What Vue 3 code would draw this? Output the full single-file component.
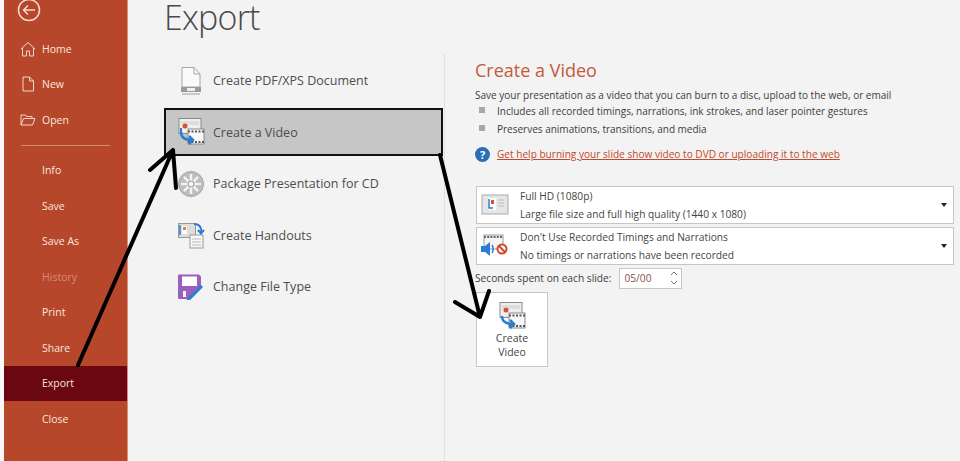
<script setup>
const navTop = [
  { label: 'Home', icon: 'home' },
  { label: 'New', icon: 'new' },
  { label: 'Open', icon: 'open' },
]
const navBottom = [
  { label: 'Info' },
  { label: 'Save' },
  { label: 'Save As' },
  { label: 'History', disabled: true },
  { label: 'Print' },
  { label: 'Share' },
  { label: 'Export', active: true },
  { label: 'Close' },
]
const exportItems = [
  { label: 'Create PDF/XPS Document', icon: 'pdf' },
  { label: 'Create a Video', icon: 'video', selected: true },
  { label: 'Package Presentation for CD', icon: 'cd' },
  { label: 'Create Handouts', icon: 'handouts' },
  { label: 'Change File Type', icon: 'type' },
]
const spokes = [0, 45, 90, 135, 180, 225, 270, 315]
</script>

<template>
  <div class="page">
    <div class="edge"></div>
    <nav class="sidebar">
      <div class="back">
        <svg width="24" height="24" viewBox="0 0 24 24" fill="none" stroke="#f3dcd4" stroke-width="1.5">
          <circle cx="12" cy="12" r="10.5" />
          <path d="M18 12H6.5M11 7.5L6.5 12l4.5 4.5" />
        </svg>
      </div>
      <div v-for="item in navTop" :key="item.label" class="nav-item">
        <span class="nav-icon">
          <svg v-if="item.icon === 'home'" width="16" height="16" viewBox="0 0 16 16" fill="none" stroke="#f1d5cb" stroke-width="1">
            <path d="M1 8l7-6.500L15 8M2.500 7v8h4v-5h3v5h4V7" />
          </svg>
          <svg v-else-if="item.icon === 'new'" width="14" height="16" viewBox="0 0 14 16" fill="none" stroke="#f1d5cb" stroke-width="1">
            <path d="M2 1h6.500L12.500 5v10H2zM8.500 1v4h4" />
          </svg>
          <svg v-else width="16" height="14" viewBox="0 0 16 14" fill="none" stroke="#f1d5cb" stroke-width="1">
            <path d="M1 12V2h4.500l1 1.500H12V5M1 12l2.500-6.500H15L12.500 12z" />
          </svg>
        </span>
        {{ item.label }}
      </div>
      <div class="nav-rule"></div>
      <div
        v-for="item in navBottom"
        :key="item.label"
        class="nav-item"
        :class="{ disabled: item.disabled, active: item.active }"
      >
        <span class="nav-icon"></span>
        {{ item.label }}
      </div>
    </nav>

    <main class="main">
      <h1 class="title">Export</h1>
      <div class="columns">
        <ul class="export-list">
          <li v-for="item in exportItems" :key="item.label" class="export-item" :class="{ selected: item.selected }">
            <span class="export-icon">
              <svg v-if="item.icon === 'pdf'" width="26" height="30" viewBox="0 0 26 30" fill="none">
                <path d="M4 1.500h12L22 8v13H4z" fill="#fafafa" stroke="#a5a5a5" />
                <path d="M16 1.500V8h6" stroke="#a5a5a5" />
                <rect x="3" y="21" width="20" height="5" fill="#9a9a9a" />
                <rect x="9" y="22" width="8" height="3" fill="#eee" />
                <path d="M4 28h18" stroke="#bbb" stroke-width="1.500" />
              </svg>
              <svg v-else-if="item.icon === 'video'" width="28" height="30" viewBox="0 0 28 30" fill="none">
                <rect x="2" y="1.500" width="22" height="15" fill="#eee" stroke="#8a8a8a" />
                <rect x="4" y="4" width="18" height="4" fill="#ddd" />
                <circle cx="8" cy="9" r="2.500" fill="#d5532f" />
                <path d="M4 11v4" stroke="#2b7cd3" stroke-width="2" />
                <rect x="11" y="12" width="16" height="15" fill="#f8f8f8" stroke="#8a8a8a" />
                <path d="M11 14.500h16M11 25h16" stroke="#555" stroke-width="2" stroke-dasharray="2 1.500" />
                <path d="M4 15c0 6 4 8 11 8M12 19l4 4-4 4" stroke="#2b7cd3" stroke-width="2.500" />
              </svg>
              <svg v-else-if="item.icon === 'cd'" width="28" height="28" viewBox="0 0 28 28" fill="none">
                <circle cx="14" cy="14" r="12.500" fill="#bdbdbd" stroke="#a5a5a5" />
                <line
                  v-for="a in spokes"
                  :key="a"
                  x1="14"
                  y1="4"
                  x2="14"
                  y2="11"
                  stroke="#f3f3f3"
                  stroke-width="2.500"
                  :transform="`rotate(${a} 14 14)`"
                />
                <circle cx="14" cy="14" r="3" fill="#f3f3f3" stroke="#999" />
              </svg>
              <svg v-else-if="item.icon === 'handouts'" width="28" height="28" viewBox="0 0 28 28" fill="none">
                <rect x="1.500" y="2.500" width="17" height="14" fill="#ddd" stroke="#999" />
                <rect x="5" y="5" width="5" height="8" fill="#fff" />
                <rect x="6" y="6" width="3" height="3" fill="#e07a55" />
                <path d="M3 4v10" stroke="#2b7cd3" stroke-width="1.500" />
                <rect x="13" y="14" width="13" height="13" fill="#f7f7f7" stroke="#999" />
                <path d="M15 18h9M15 21h9M15 24h9" stroke="#bbb" />
                <path d="M17 3c6 0 8 4 7 9M21 9l3 3.500 3-3.500" stroke="#2b7cd3" stroke-width="2" />
              </svg>
              <svg v-else width="28" height="27" viewBox="0 0 28 27" fill="none">
                <path d="M1 2.500a1 1 0 0 1 1-1h20l2 2V14L13 26H2a1 1 0 0 1-1-1z" fill="#9b5fc0" />
                <rect x="5" y="3.500" width="15" height="9.500" fill="#fff" />
                <rect x="6" y="18" width="3" height="6" fill="#fff" />
                <path d="M12 26l13-13" stroke="#2b7cd3" stroke-width="3" />
                <path d="M10 27l2.500-1" stroke="#2b7cd3" stroke-width="1.500" />
              </svg>
            </span>
            <span class="export-label">{{ item.label }}</span>
          </li>
        </ul>

        <section class="panel">
          <h2 class="panel-title">Create a Video</h2>
          <p class="panel-intro">Save your presentation as a video that you can burn to a disc, upload to the web, or email</p>
          <div class="bullet"><i></i>Includes all recorded timings, narrations, ink strokes, and laser pointer gestures</div>
          <div class="bullet"><i></i>Preserves animations, transitions, and media</div>
          <div class="help">
            <span class="help-badge">?</span>
            <a class="help-link">Get help burning your slide show video to DVD or uploading it to the web</a>
          </div>

          <div class="dropdown first">
            <span class="drop-icon">
              <svg width="28" height="22" viewBox="0 0 28 22" fill="none">
                <rect x="1" y="1" width="26" height="19" fill="#e6e6e6" stroke="#aaa" />
                <rect x="7" y="4" width="8" height="12" fill="#fff" />
                <path d="M8 5v9h4" stroke="#2b7cd3" stroke-width="1.500" />
                <rect x="10" y="6" width="3" height="4" fill="#d5532f" />
                <path d="M17 6h6M17 9h6M17 12h6" stroke="#bbb" />
              </svg>
            </span>
            <div class="drop-text">
              <div>Full HD (1080p)</div>
              <div>Large file size and full high quality (1440 x 1080)</div>
            </div>
            <span class="caret"></span>
          </div>
          <div class="dropdown">
            <span class="drop-icon">
              <svg width="30" height="26" viewBox="0 0 30 26" fill="none">
                <rect x="4" y="2" width="19" height="14" fill="#f5f5f5" stroke="#999" />
                <path d="M4 4h19" stroke="#666" stroke-width="2" stroke-dasharray="2 1.200" />
                <path d="M1 13h4l5-4v14l-5-4H1z" fill="#2b7cd3" />
                <path d="M12 12c1.500 2 1.500 6 0 8" stroke="#2b7cd3" stroke-width="1.500" />
                <circle cx="22" cy="16" r="4.500" fill="#fff" stroke="#d5462a" stroke-width="2" />
                <path d="M19 13l6 6" stroke="#d5462a" stroke-width="2" />
              </svg>
            </span>
            <div class="drop-text">
              <div>Don't Use Recorded Timings and Narrations</div>
              <div>No timings or narrations have been recorded</div>
            </div>
            <span class="caret"></span>
          </div>

          <div class="seconds">
            <span>Seconds spent on each slide:</span>
            <div class="spinner">
              <span class="spin-value">05/00</span>
              <span class="spin-arrows">
                <svg width="8" height="16" viewBox="0 0 8 16" fill="none" stroke="#777">
                  <path d="M1 5l3-3 3 3M1 11l3 3 3-3" />
                </svg>
              </span>
            </div>
          </div>

          <button class="create-btn">
            <svg width="30" height="30" viewBox="0 0 28 30" fill="none">
              <rect x="2" y="1.500" width="22" height="15" fill="#eee" stroke="#8a8a8a" />
              <rect x="4" y="4" width="18" height="4" fill="#ddd" />
              <circle cx="8" cy="9" r="2.500" fill="#d5532f" />
              <rect x="11" y="12" width="16" height="15" fill="#f8f8f8" stroke="#8a8a8a" />
              <path d="M11 14.500h16M11 25h16" stroke="#555" stroke-width="2" stroke-dasharray="2 1.500" />
              <path d="M4 15c0 6 4 8 11 8M12 19l4 4-4 4" stroke="#2b7cd3" stroke-width="2.500" />
            </svg>
            <span>Create<br />Video</span>
          </button>
        </section>
      </div>
    </main>

    <svg class="arrows" width="960" height="461" viewBox="0 0 960 461" fill="none" stroke="#000" stroke-width="4" stroke-linecap="round" stroke-linejoin="round">
      <path d="M78 365L173 150M150 170L173 150L176 188" />
      <path d="M440 155L480 317M455 302L480 317L489 291" />
    </svg>
  </div>
</template>

<style>
html, body { margin: 0; background: #f3f3f3; }
</style>

<style scoped>
.page {
  position: relative;
  display: flex;
  width: 960px;
  height: 461px;
  overflow: hidden;
  background: #f3f3f3;
  font-family: "Open Sans", "Noto Sans", sans-serif;
  color: #444;
}
.edge { width: 4px; background: #f8f8f8; flex: none; }
.sidebar {
  width: 123px;
  flex: none;
  background: #b7472a;
  color: #f8e6df;
  font-size: 10.5px;
  display: flex;
  flex-direction: column;
  border-right: 1px solid #d98f7a;
  box-sizing: content-box;
}
.back { height: 31px; padding-left: 13px; }
.back svg { display: block; margin-top: -2px; }
.nav-item { height: 35.5px; flex: none; display: flex; align-items: center; }
.nav-icon { width: 38px; flex: none; display: flex; justify-content: center; padding-left: 10px; box-sizing: border-box; }
.nav-rule { height: 1px; margin: 7px 0 7px 17px; width: 89px; background: #d08a74; flex: none; }
.nav-item.disabled { color: #d88d76; }
.nav-item.active { background: #6b0710; color: #f5e3de; }

.main { flex: 1; min-width: 0; display: flex; flex-direction: column; }
.title {
  margin: 0;
  height: 55px;
  padding: 0 0 0 36px;
  box-sizing: border-box;
  font-size: 34px;
  font-weight: 300;
  letter-spacing: -0.8px;
  line-height: 34px;
  color: #4a4a4a;
}
.columns { flex: 1; display: flex; min-height: 0; }
.export-list {
  list-style: none;
  margin: 0;
  padding: 0 0 0 36px;
  width: 317px;
  box-sizing: border-box;
  border-right: 1px dotted #d2d2d2;
  display: flex;
  flex-direction: column;
}
.export-item {
  height: 51.5px;
  flex: none;
  display: flex;
  align-items: center;
  font-size: 12.5px;
  color: #4d4d4d;
  box-sizing: border-box;
}
.export-item.selected {
  height: 48px;
  margin: 1.5px 1px 2px 0;
  background: #c6c6c6;
  border: 2px solid #111;
}
.export-item.selected .export-icon { margin-left: -2px; }
.export-icon { width: 49px; flex: none; display: flex; justify-content: center; padding-left: 5px; box-sizing: border-box; }
.export-icon svg { display: block; }

.panel { padding: 1px 0 0 30px; flex: 1; min-width: 0; font-size: 10px; color: #3d3d3d; }
.panel-title { margin: 0; height: 30px; font-size: 18px; font-weight: 400; color: #c55a3c; line-height: 28px; }
.panel-intro { margin: 0; height: 16px; line-height: 18px; }
.bullet { height: 18px; line-height: 18px; display: flex; align-items: center; padding-left: 22px; position: relative; }
.bullet i { position: absolute; left: 4px; top: 5px; width: 6px; height: 6px; background: #a8a8a8; }
.help { height: 32px; display: flex; align-items: center; gap: 7px; margin-bottom: 16px; }
.help-badge {
  width: 15px;
  height: 15px;
  border-radius: 50%;
  background: #2a6fb5;
  color: #fff;
  font-size: 11px;
  font-weight: 700;
  line-height: 15px;
  text-align: center;
  flex: none;
}
.help-link { color: #c0492c; text-decoration: underline; font-size: 10.1px; }
.dropdown {
  width: 478px;
  height: 38px;
  box-sizing: border-box;
  margin-left: 1px;
  background: #fff;
  border: 1px solid #c6c6c6;
  display: flex;
  align-items: center;
}
.dropdown.first { margin-bottom: 3px; }
.drop-icon { width: 36px; flex: none; display: flex; justify-content: center; }
.drop-text { flex: 1; line-height: 18px; font-size: 10.2px; color: #444; padding-left: 7px; }
.caret {
  width: 0;
  height: 0;
  margin-right: 6px;
  border-left: 3px solid transparent;
  border-right: 3px solid transparent;
  border-top: 4px solid #222;
}
.seconds { height: 24px; margin-top: 1px; display: flex; align-items: center; gap: 8px; font-size: 10.2px; }
.spinner {
  width: 63px;
  height: 21px;
  box-sizing: border-box;
  background: #fff;
  border: 1px solid #c6c6c6;
  display: flex;
  align-items: center;
  justify-content: space-between;
  padding: 0 3px 0 4px;
  color: #8a5050;
}
.spin-arrows { display: flex; }
.create-btn {
  display: flex;
  flex-direction: column;
  align-items: center;
  width: 72px;
  height: 75px;
  margin: 2px 0 0 1px;
  padding: 8px 0 0;
  background: #fff;
  border: 1px solid #c6c6c6;
  box-sizing: border-box;
  font: inherit;
  font-size: 10.5px;
  line-height: 14px;
  color: #444;
  text-align: center;
}
.arrows { position: absolute; left: 0; top: 0; pointer-events: none; }
</style>
